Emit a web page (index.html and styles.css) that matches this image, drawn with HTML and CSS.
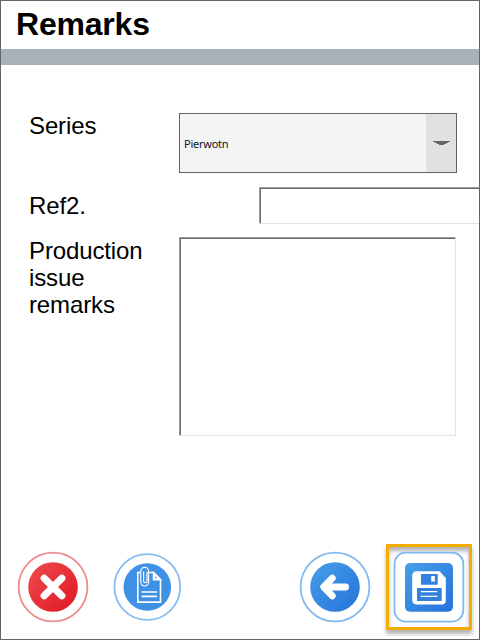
FILE: index.html
```html
<!DOCTYPE html>
<html lang="en">
<head>
<meta charset="utf-8">
<title>Remarks</title>
<link rel="stylesheet" href="styles.css">
</head>
<body>
<main class="window">
  <header class="header"><h1 class="title">Remarks</h1></header>
  <form class="form">
    <div class="row row-series">
      <span class="label">Series</span>
      <div class="select">
        <span class="select-value">Pierwotn</span>
        <span class="select-button"><svg width="17" height="4" viewBox="0 0 17 4" shape-rendering="crispEdges"><path d="M0 0h17v1H0zM2 1h13v1H2zM4 2h9v1H4zM6 3h5v1H6z" fill="#646464"/></svg></span>
      </div>
    </div>
    <div class="row row-ref">
      <span class="label">Ref2.</span>
      <div class="field field-ref"></div>
    </div>
    <div class="row row-remarks">
      <span class="label">Production issue remarks</span>
      <div class="field field-remarks"></div>
    </div>
  </form>
  <footer class="actions">
    <svg class="icon cancel" width="72" height="72" viewBox="0 0 72 72">
      <defs><linearGradient id="red" x1="0" y1="0" x2="1" y2="1"><stop offset="0" stop-color="#ef4a50"/><stop offset="1" stop-color="#df1820"/></linearGradient></defs>
      <circle cx="36" cy="36" r="34.4" fill="#fff" stroke="#ee8c90" stroke-width="1.8"/>
      <circle cx="36" cy="36" r="24.8" fill="url(#red)"/>
      <path d="M27.2 27.2l17.6 17.6M44.8 27.2L27.2 44.8" stroke="#fff" stroke-width="7.2" stroke-linecap="round"/>
    </svg>
    <svg class="icon attach" width="72" height="72" viewBox="0 0 72 72">
      <defs><linearGradient id="blue" x1="0" y1="0" x2="1" y2="1"><stop offset="0" stop-color="#469fe9"/><stop offset="1" stop-color="#2572db"/></linearGradient></defs>
      <circle cx="36.3" cy="36" r="32.9" fill="#fff" stroke="#86bdf2" stroke-width="1.8"/>
      <circle cx="36.3" cy="36" r="23.8" fill="#3e91e4"/>
      <g fill="none" stroke="#fff" stroke-width="1.6">
        <path d="M29.2 21.5h-2.4v29.6h22.7V28.6l-6.9-7.1h-4.4"/>
        <path d="M42.6 22v6.6h6.6z" fill="#fff"/>
        <path d="M44 25.3v2h2z" fill="#3e91e4" stroke="none"/>
        <path d="M30.6 41h15.4M30.6 45.4h15.4"/>
        <path d="M36 20.8V30a1.7 1.7 0 0 1-3.4 0v-9.5M29.8 21.8v-1.6a3.9 3.9 0 0 1 7.8 0v10.9a3.9 3.9 0 0 1-7.8 0v-9.3" stroke-width="1.15"/>
      </g>
    </svg>
    <svg class="icon back" width="72" height="72" viewBox="0 0 72 72">
      <circle cx="36" cy="36" r="34.4" fill="#fff" stroke="#82b9f0" stroke-width="1.8"/>
      <circle cx="36" cy="36" r="24.8" fill="url(#blue)"/>
      <path d="M33.3 27.2L24.7 36l8.6 8.8M26 36h20.6" fill="none" stroke="#fff" stroke-width="6.8" stroke-linecap="round" stroke-linejoin="round"/>
    </svg>
    <div class="highlight">
      <svg class="save" width="72" height="72" viewBox="0 0 72 72">
        <rect x="1.5" y="1.6" width="68.8" height="69" rx="11" fill="none" stroke="#82b9f0" stroke-width="1.8"/>
        <rect x="12" y="12" width="48" height="48.7" rx="5" fill="url(#blue)"/>
        <path d="M23.5 20.2h23l6.3 6.8v22.5a4 4 0 0 1-4 4H23.5a4.3 4.3 0 0 1-4.3-4.3V24.5a4.3 4.3 0 0 1 4.3-4.3z" fill="#fff"/>
        <path d="M28 23h16.7v10.7H28zM24 37h24.7v13H24z" fill="#3480df"/>
        <path d="M38.2 25h3.6v5.4h-3.6zM27.8 40.1h16.5v1.1H27.8zM27.8 44.8h16.5v1.1H27.8z" fill="#fff"/>
      </svg>
    </div>
  </footer>
</main>
</body>
</html>
```
FILE: styles.css
```css
* { box-sizing: border-box; }
body { margin: 0; background: #fff; }
.window {
  width: 480px; height: 640px;
  border: 1px solid #646464;
  display: flex; flex-direction: column;
  overflow: hidden;
  font-family: "Liberation Sans", Arial, sans-serif;
  color: #000;
}
.header { height: 64px; flex: none; border-bottom: 16px solid #a7b1ba; padding: 5px 0 0 15px; }
.title { margin: 0; font-size: 32px; line-height: 36px; font-weight: bold; letter-spacing: -.2px; }
.form { padding: 48px 0 0 28px; flex: 1; }
.row { display: flex; align-items: flex-start; }
.row-series { height: 74px; }
.row-ref { height: 50px; }
.label { width: 120px; margin-right: 30px; flex: none; font-size: 24px; line-height: 27px; letter-spacing: -.13px; }
.row-series .label { margin-top: -1px; }
.row-ref .label { margin: 5px 80px 0 0; width: 150px; }
.select {
  width: 278px; height: 60px;
  border: 1px solid #646464; background: #f4f4f4;
  display: flex; align-items: stretch;
}
.select-value { flex: 1; align-self: center; padding: 2px 0 0 4px; font: 11px/14px "Noto Sans", sans-serif; letter-spacing: -.25px; color: #101020; }
.select-button { width: 30px; background: #e1e1e1; display: flex; align-items: center; justify-content: center; }
.field {
  flex: none; background: #fff;
  border: 1px solid #e2e2e2;
  border-top-color: #a0a0a0; border-left-color: #a0a0a0;
  box-shadow: inset 1px 1px 0 #696969;
}
.field-ref { width: 240px; height: 37px; }
.field-remarks { width: 277px; height: 199px; }
.actions { height: 96px; flex: none; display: flex; padding-left: 16px; }
.icon { flex: none; margin-top: 8px; }
.attach { margin-left: 22px; }
.back { margin-left: 116px; }
.highlight {
  flex: none; width: 86px; height: 86px; margin: 1px 0 0 15px;
  border: 3px solid #f5ac00; padding: 4px 0 0 4px;
  box-shadow: 0 4px 4px rgba(0,0,0,.3), inset 0 4px 4px rgba(0,0,0,.3);
}
.save { display: block; }
```
